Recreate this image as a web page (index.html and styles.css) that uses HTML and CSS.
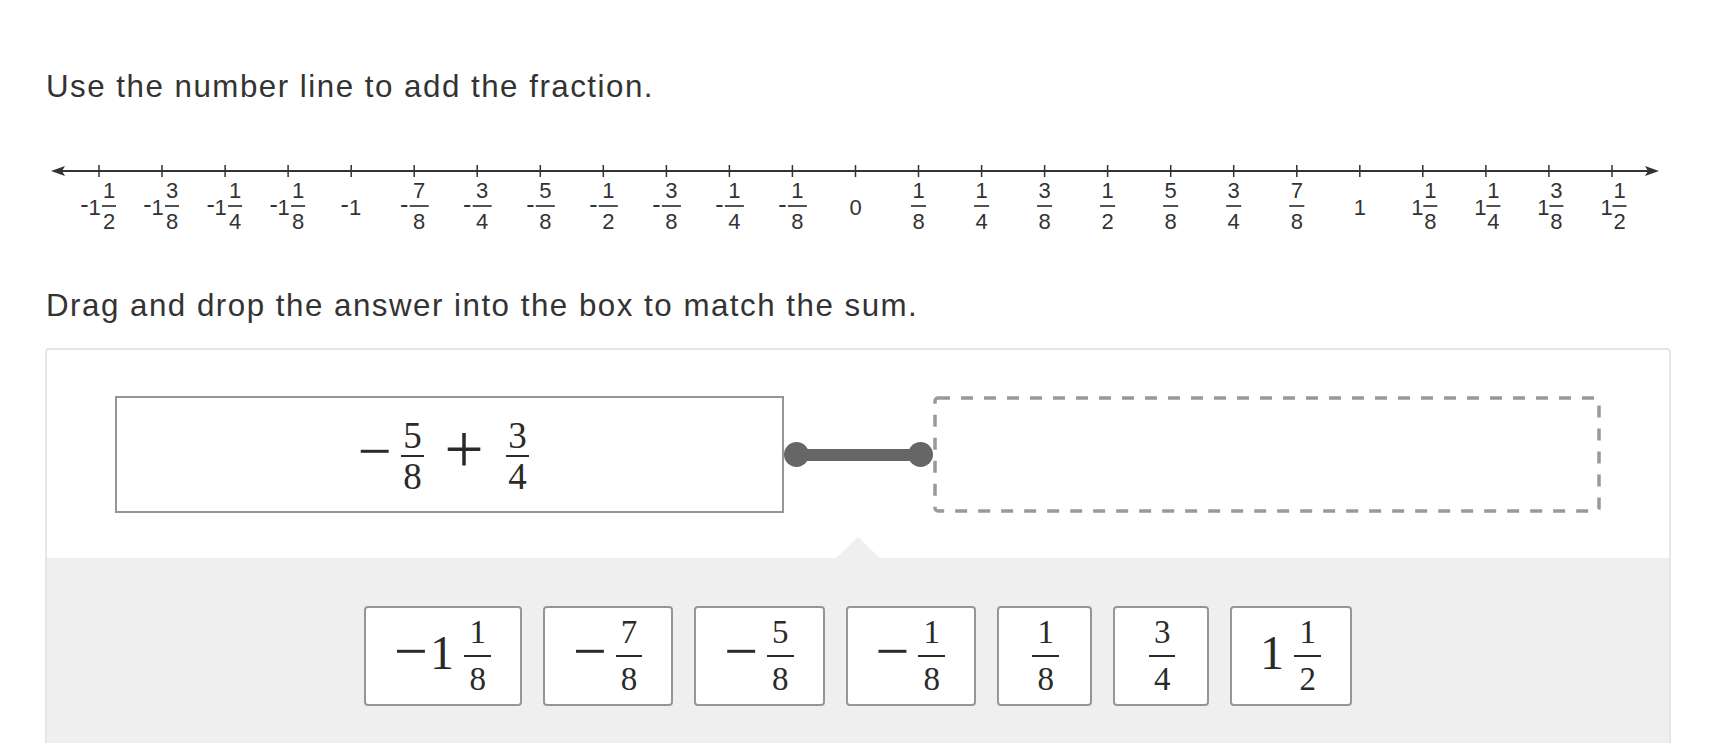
FILE: index.html
```html
<!DOCTYPE html>
<html lang="en">
<head>
<meta charset="utf-8">
<title>Number line fractions</title>
<link rel="stylesheet" href="styles.css">
</head>
<body>
<p class="prompt prompt-first">Use the number line to add the fraction.</p>

<svg class="numberline" width="1710" height="100" viewBox="0 140 1710 100" xmlns="http://www.w3.org/2000/svg">
  <line class="nl-axis" x1="58" y1="171" x2="1652" y2="171"/>
  <polygon class="nl-arrow" points="51,171 65,166 62,171 65,176"/>
  <polygon class="nl-arrow" points="1659,171 1645,166 1648,171 1645,176"/>
  <g class="nl-ticks">
    <line x1="99" x2="99" y1="165" y2="177"/><line x1="162" x2="162" y1="165" y2="177"/>
    <line x1="225.1" x2="225.1" y1="165" y2="177"/><line x1="288.1" x2="288.1" y1="165" y2="177"/>
    <line x1="351.2" x2="351.2" y1="165" y2="177"/><line x1="414.2" x2="414.2" y1="165" y2="177"/>
    <line x1="477.2" x2="477.2" y1="165" y2="177"/><line x1="540.3" x2="540.3" y1="165" y2="177"/>
    <line x1="603.3" x2="603.3" y1="165" y2="177"/><line x1="666.4" x2="666.4" y1="165" y2="177"/>
    <line x1="729.4" x2="729.4" y1="165" y2="177"/><line x1="792.4" x2="792.4" y1="165" y2="177"/>
    <line x1="855.5" x2="855.5" y1="165" y2="177"/><line x1="918.5" x2="918.5" y1="165" y2="177"/>
    <line x1="981.6" x2="981.6" y1="165" y2="177"/><line x1="1044.6" x2="1044.6" y1="165" y2="177"/>
    <line x1="1107.6" x2="1107.6" y1="165" y2="177"/><line x1="1170.7" x2="1170.7" y1="165" y2="177"/>
    <line x1="1233.7" x2="1233.7" y1="165" y2="177"/><line x1="1296.8" x2="1296.8" y1="165" y2="177"/>
    <line x1="1359.8" x2="1359.8" y1="165" y2="177"/><line x1="1422.8" x2="1422.8" y1="165" y2="177"/>
    <line x1="1485.9" x2="1485.9" y1="165" y2="177"/><line x1="1548.9" x2="1548.9" y1="165" y2="177"/>
    <line x1="1612" x2="1612" y1="165" y2="177"/>
  </g>
  <g class="nl-labels">
    <!-- negative mixed -->
    <g transform="translate(99 0)"><text class="m" x="-14.5" y="212.5">-</text><text x="-4.5" y="214.5">1</text><text x="10" y="198">1</text><line x1="3" x2="17" y1="206" y2="206"/><text x="10" y="229">2</text></g>
    <g transform="translate(162 0)"><text class="m" x="-14.5" y="212.5">-</text><text x="-4.5" y="214.5">1</text><text x="10" y="198">3</text><line x1="3" x2="17" y1="206" y2="206"/><text x="10" y="229">8</text></g>
    <g transform="translate(225.1 0)"><text class="m" x="-14.5" y="212.5">-</text><text x="-4.5" y="214.5">1</text><text x="10" y="198">1</text><line x1="3" x2="17" y1="206" y2="206"/><text x="10" y="229">4</text></g>
    <g transform="translate(288.1 0)"><text class="m" x="-14.5" y="212.5">-</text><text x="-4.5" y="214.5">1</text><text x="10" y="198">1</text><line x1="3" x2="17" y1="206" y2="206"/><text x="10" y="229">8</text></g>
    <g transform="translate(351.2 0)"><text class="m" x="-6.5" y="212.5">-</text><text x="4" y="214.5">1</text></g>
    <!-- negative fractions -->
    <g transform="translate(414.2 0)"><text class="m" x="-10" y="212.5">-</text><text x="5" y="198">7</text><line x1="-4.5" x2="14.5" y1="206" y2="206"/><text x="5" y="229">8</text></g>
    <g transform="translate(477.2 0)"><text class="m" x="-10" y="212.5">-</text><text x="5" y="198">3</text><line x1="-4.5" x2="14.5" y1="206" y2="206"/><text x="5" y="229">4</text></g>
    <g transform="translate(540.3 0)"><text class="m" x="-10" y="212.5">-</text><text x="5" y="198">5</text><line x1="-4.5" x2="14.5" y1="206" y2="206"/><text x="5" y="229">8</text></g>
    <g transform="translate(603.3 0)"><text class="m" x="-10" y="212.5">-</text><text x="5" y="198">1</text><line x1="-4.5" x2="14.5" y1="206" y2="206"/><text x="5" y="229">2</text></g>
    <g transform="translate(666.4 0)"><text class="m" x="-10" y="212.5">-</text><text x="5" y="198">3</text><line x1="-4.5" x2="14.5" y1="206" y2="206"/><text x="5" y="229">8</text></g>
    <g transform="translate(729.4 0)"><text class="m" x="-10" y="212.5">-</text><text x="5" y="198">1</text><line x1="-4.5" x2="14.5" y1="206" y2="206"/><text x="5" y="229">4</text></g>
    <g transform="translate(792.4 0)"><text class="m" x="-10" y="212.5">-</text><text x="5" y="198">1</text><line x1="-4.5" x2="14.5" y1="206" y2="206"/><text x="5" y="229">8</text></g>
    <!-- zero -->
    <g transform="translate(855.5 0)"><text x="0" y="214.5">0</text></g>
    <!-- positive fractions -->
    <g transform="translate(918.5 0)"><text y="198">1</text><line x1="-7.5" x2="7.5" y1="206" y2="206"/><text y="229">8</text></g>
    <g transform="translate(981.6 0)"><text y="198">1</text><line x1="-7.5" x2="7.5" y1="206" y2="206"/><text y="229">4</text></g>
    <g transform="translate(1044.6 0)"><text y="198">3</text><line x1="-7.5" x2="7.5" y1="206" y2="206"/><text y="229">8</text></g>
    <g transform="translate(1107.6 0)"><text y="198">1</text><line x1="-7.5" x2="7.5" y1="206" y2="206"/><text y="229">2</text></g>
    <g transform="translate(1170.7 0)"><text y="198">5</text><line x1="-7.5" x2="7.5" y1="206" y2="206"/><text y="229">8</text></g>
    <g transform="translate(1233.7 0)"><text y="198">3</text><line x1="-7.5" x2="7.5" y1="206" y2="206"/><text y="229">4</text></g>
    <g transform="translate(1296.8 0)"><text y="198">7</text><line x1="-7.5" x2="7.5" y1="206" y2="206"/><text y="229">8</text></g>
    <!-- one -->
    <g transform="translate(1359.8 0)"><text x="0" y="214.5">1</text></g>
    <!-- positive mixed -->
    <g transform="translate(1422.8 0)"><text x="-5.5" y="214.5">1</text><text x="7.5" y="198">1</text><line x1="0.5" x2="14.5" y1="206" y2="206"/><text x="7.5" y="229">8</text></g>
    <g transform="translate(1485.9 0)"><text x="-5.5" y="214.5">1</text><text x="7.5" y="198">1</text><line x1="0.5" x2="14.5" y1="206" y2="206"/><text x="7.5" y="229">4</text></g>
    <g transform="translate(1548.9 0)"><text x="-5.5" y="214.5">1</text><text x="7.5" y="198">3</text><line x1="0.5" x2="14.5" y1="206" y2="206"/><text x="7.5" y="229">8</text></g>
    <g transform="translate(1612 0)"><text x="-5.5" y="214.5">1</text><text x="7.5" y="198">1</text><line x1="0.5" x2="14.5" y1="206" y2="206"/><text x="7.5" y="229">2</text></g>
  </g>
</svg>

<p class="prompt prompt-second">Drag and drop the answer into the box to match the sum.</p>

<section class="panel">
  <div class="match-row">
    <div class="expr-box">
      <span class="math expr">
        <span class="op op-minus">−</span>
        <span class="frac frac-expr"><span class="num">5</span><span class="den">8</span></span>
        <span class="op op-plus">+</span>
        <span class="frac frac-expr"><span class="num">3</span><span class="den">4</span></span>
      </span>
    </div>
    <div class="connector"><span class="dot"></span><span class="rod"></span><span class="dot"></span></div>
    <svg class="drop-box" width="668" height="117" viewBox="0 0 668 117" xmlns="http://www.w3.org/2000/svg">
      <rect x="2" y="2" width="664" height="113" rx="3" ry="3"/>
    </svg>
  </div>
  <div class="tray">
    <div class="tiles">
      <div class="tile"><span class="t-minus">−</span><span class="t-whole">1</span><span class="frac frac-tile"><span class="num">1</span><span class="den">8</span></span></div>
      <div class="tile"><span class="t-minus">−</span><span class="frac frac-tile"><span class="num">7</span><span class="den">8</span></span></div>
      <div class="tile"><span class="t-minus">−</span><span class="frac frac-tile"><span class="num">5</span><span class="den">8</span></span></div>
      <div class="tile"><span class="t-minus">−</span><span class="frac frac-tile"><span class="num">1</span><span class="den">8</span></span></div>
      <div class="tile"><span class="frac frac-tile"><span class="num">1</span><span class="den">8</span></span></div>
      <div class="tile"><span class="frac frac-tile"><span class="num">3</span><span class="den">4</span></span></div>
      <div class="tile"><span class="t-whole">1</span><span class="frac frac-tile"><span class="num">1</span><span class="den">2</span></span></div>
    </div>
  </div>
</section>
</body>
</html>
```

FILE: styles.css
```css
html, body {
  margin: 0;
  padding: 0;
  background: #ffffff;
}

body {
  font-family: "Liberation Sans", Arial, Helvetica, sans-serif;
  color: #333333;
  overflow: hidden;
}

.prompt {
  margin: 0 0 0 46px;
  font-size: 31.3px;
  line-height: 36px;
  letter-spacing: 1.5px;
  color: #333333;
}

.prompt-first {
  padding-top: 69px;
}

.prompt-second {
  margin-top: 48px;
}

/* number line */
.numberline {
  display: block;
  margin-top: 35px;
}

.nl-axis {
  stroke: #333333;
  stroke-width: 2;
}

.nl-arrow {
  fill: #333333;
}

.nl-ticks line {
  stroke: #333333;
  stroke-width: 1.5;
}

.nl-labels text {
  font-family: "Liberation Sans", Arial, sans-serif;
  font-size: 22px;
  fill: #333333;
  text-anchor: middle;
}

.nl-labels text.m {
  font-size: 25px;
}

.nl-labels line {
  stroke: #333333;
  stroke-width: 1.7;
}

/* panel */
.panel {
  margin: 24px 0 0 45px;
  width: 1626px;
  box-sizing: border-box;
  border: 2px solid #e6e6e6;
  border-radius: 4px;
  background: #ffffff;
  overflow: hidden;
}

.match-row {
  display: flex;
  justify-content: center;
  align-items: center;
  padding: 46px 0 45px;
}

.expr-box {
  width: 669px;
  height: 117px;
  box-sizing: border-box;
  border: 2px solid #959595;
  display: flex;
  align-items: center;
  justify-content: center;
  background: #ffffff;
}

.math {
  font-family: "Liberation Serif", "Times New Roman", serif;
  color: #2a2a2a;
}

.expr {
  display: flex;
  align-items: center;
  padding-top: 3px;
  padding-right: 12px;
}

.op {
  line-height: 1;
}

.op-minus {
  font-size: 60px;
  margin-right: 9px;
  margin-bottom: 10px;
}

.op-plus {
  font-size: 70px;
  margin-left: 20px;
  margin-right: 22px;
  margin-bottom: 12px;
}

.frac {
  display: inline-flex;
  flex-direction: column;
  align-items: center;
}

.frac .num,
.frac .den {
  display: block;
  line-height: 1;
}

.frac-expr {
  font-size: 37px;
}

.frac-expr .num {
  padding: 0 2.5px 1px;
  border-bottom: 2px solid #2a2a2a;
}

.frac-expr .den {
  padding-top: 1px;
}

.connector {
  width: 149px;
  display: flex;
  align-items: center;
}

.dot {
  width: 25px;
  height: 25px;
  border-radius: 50%;
  background: #666666;
  flex: none;
}

.rod {
  flex: 1;
  height: 12px;
  background: #666666;
  margin: 0 -3px;
}

.drop-box {
  display: block;
}

.drop-box rect {
  fill: #ffffff;
  stroke: #999999;
  stroke-width: 3.5;
  stroke-dasharray: 12 11;
}

/* tray */
.tray {
  position: relative;
  background: #efefef;
  padding: 48px 0 60px;
}

.tray::before {
  content: "";
  position: absolute;
  left: 50%;
  top: -21px;
  margin-left: -22px;
  border-left: 22px solid transparent;
  border-right: 22px solid transparent;
  border-bottom: 21px solid #efefef;
}

.tiles {
  display: flex;
  justify-content: center;
  gap: 21px;
}

.tile {
  height: 100px;
  box-sizing: border-box;
  padding: 0 26px 0 28px;
  border: 2px solid #969696;
  border-radius: 4px;
  background: #ffffff;
  display: flex;
  align-items: center;
  font-family: "Liberation Serif", "Times New Roman", serif;
  color: #2a2a2a;
}

.t-minus {
  font-size: 60px;
  line-height: 1;
  margin-bottom: 10px;
  margin-right: 2px;
}

.t-whole {
  font-size: 48px;
  line-height: 1;
  margin-bottom: 6px;
  margin-right: 7.5px;
}

.frac-tile {
  font-size: 33px;
  margin: 0 3px;
}

.frac-tile:only-child {
  margin: 0 5.5px;
}

.t-minus + .frac-tile {
  margin-left: 7px;
}

.frac-tile .num {
  padding: 0 5px 6px;
  border-bottom: 2.5px solid #2a2a2a;
}

.frac-tile .den {
  padding-top: 6px;
}
```
